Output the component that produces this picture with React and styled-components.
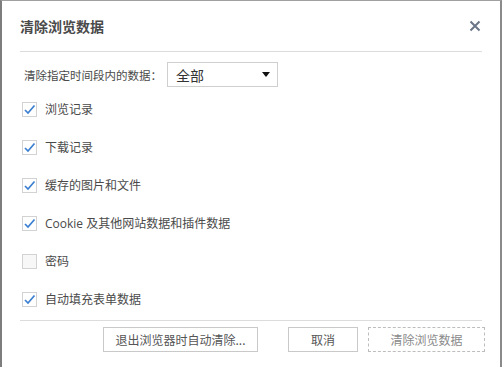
import styled, {createGlobalStyle} from 'styled-components';

const GlobalStyle = createGlobalStyle`
  html, body {
    margin: 0;
    padding: 0;
    background: #ffffff;
  }
  body {
    font-family: "Open Sans", "Noto Sans CJK SC", sans-serif;
  }
`

const Dialog = styled.div`
  box-sizing: border-box;
  width: 502px;
  height: 367px;
  background: #fff;
  border-left: 2px solid #7d7d7d;
  border-right: 2px solid #8a8a8a;
  border-top: 1px solid #a0a0a0;
  padding: 0 18px;
  display: flex;
  flex-direction: column;
  overflow: hidden;
`

const Header = styled.div`
  height: 50px;
  display: flex;
  align-items: center;
  justify-content: space-between;
  border-bottom: 1px solid #dcdcdc;
`

const Title = styled.h1`
  margin: 0;
  font-size: 14px;
  font-weight: 700;
  color: #4a4a4a;
  font-family: "Noto Sans CJK SC", sans-serif;
`

const CloseButton = styled.button`
  border: 0;
  background: none;
  padding: 0;
  width: 12px;
  height: 12px;
  margin-right: 1px;
  display: flex;
  cursor: pointer;
`

const RangeRow = styled.div`
  display: flex;
  align-items: center;
  margin: 10px 0 0 4px;
  height: 25px;
`

const RangeLabel = styled.span`
  font-size: 11.5px;
  color: #4a4a4a;
  font-family: "Noto Sans CJK SC", sans-serif;
  width: 143px;
  white-space: nowrap;
`

const Select = styled.div`
  box-sizing: border-box;
  width: 111px;
  height: 25px;
  border: 1px solid #cfcfcf;
  display: flex;
  align-items: center;
  justify-content: space-between;
  padding: 0 7px 0 8px;
  font-size: 14px;
  color: #333;
  font-family: "Noto Sans CJK SC", sans-serif;
`

const Caret = styled.span`
  width: 0;
  height: 0;
  border-left: 4px solid transparent;
  border-right: 4px solid transparent;
  border-top: 5px solid #111;
`

const Options = styled.div`
  margin-top: 3px;
  display: flex;
  flex-direction: column;
`

const Option = styled.label`
  height: 38px;
  display: flex;
  align-items: center;
  gap: 8px;
  padding-left: 2px;
  font-size: 12px;
  color: #4a4a4a;
  cursor: pointer;
`

const Box = styled.span`
  box-sizing: border-box;
  width: 15px;
  height: 15px;
  border: 1px solid #d2d2d2;
  background: ${p => p.$checked ? '#fff' : '#f7f7f7'};
  display: flex;
  align-items: center;
  justify-content: center;
`

const Footer = styled.div`
  margin-top: auto;
  border-top: 1px solid #dcdcdc;
  height: 40px;
  display: flex;
  align-items: flex-start;
  justify-content: flex-end;
  padding-top: 6px;
`

const Button = styled.button`
  box-sizing: border-box;
  flex: none;
  height: 25px;
  width: ${p => p.$w}px;
  margin-left: ${p => p.$gap}px;
  background: #fff;
  border: 1px ${p => p.$faded ? 'dashed #bdbdbd' : 'solid #c9c9c9'};
  color: ${p => p.$faded ? '#8a8a8a' : '#555'};
  font-size: 12px;
  font-family: "Noto Sans CJK SC", sans-serif;
  padding: 0;
  cursor: pointer;

  &:last-child {
    margin-right: -3px;
  }
`

const items = [
    {label: '浏览记录', checked: true},
    {label: '下载记录', checked: true},
    {label: '缓存的图片和文件', checked: true},
    {label: 'Cookie 及其他网站数据和插件数据', checked: true},
    {label: '密码', checked: false},
    {label: '自动填充表单数据', checked: true},
]

const Check = () => (
    <svg width="13" height="13" viewBox="0 0 13 13">
        <path d="M2 7 L5 10 L11.5 2.5" fill="none" stroke="#3b7fd0" strokeWidth="1.7"/>
    </svg>
)

const App = () => {
    return (
        <>
            <GlobalStyle/>
            <Dialog>
                <Header>
                    <Title>清除浏览数据</Title>
                    <CloseButton aria-label="close">
                        <svg width="12" height="12" viewBox="0 0 12 12">
                            <path d="M1.5 1.5 L10.5 10.5 M10.5 1.5 L1.5 10.5" stroke="#6b7686" strokeWidth="2"/>
                        </svg>
                    </CloseButton>
                </Header>
                <RangeRow>
                    <RangeLabel>清除指定时间段内的数据：</RangeLabel>
                    <Select>
                        <span>全部</span>
                        <Caret/>
                    </Select>
                </RangeRow>
                <Options>
                    {items.map(it => (
                        <Option key={it.label}>
                            <Box $checked={it.checked}>{it.checked && <Check/>}</Box>
                            {it.label}
                        </Option>
                    ))}
                </Options>
                <Footer>
                    <Button $w={155} $gap={0}>退出浏览器时自动清除...</Button>
                    <Button $w={70} $gap={30}>取消</Button>
                    <Button $w={117} $gap={10} $faded>清除浏览数据</Button>
                </Footer>
            </Dialog>
        </>
    );
};

export default App;
